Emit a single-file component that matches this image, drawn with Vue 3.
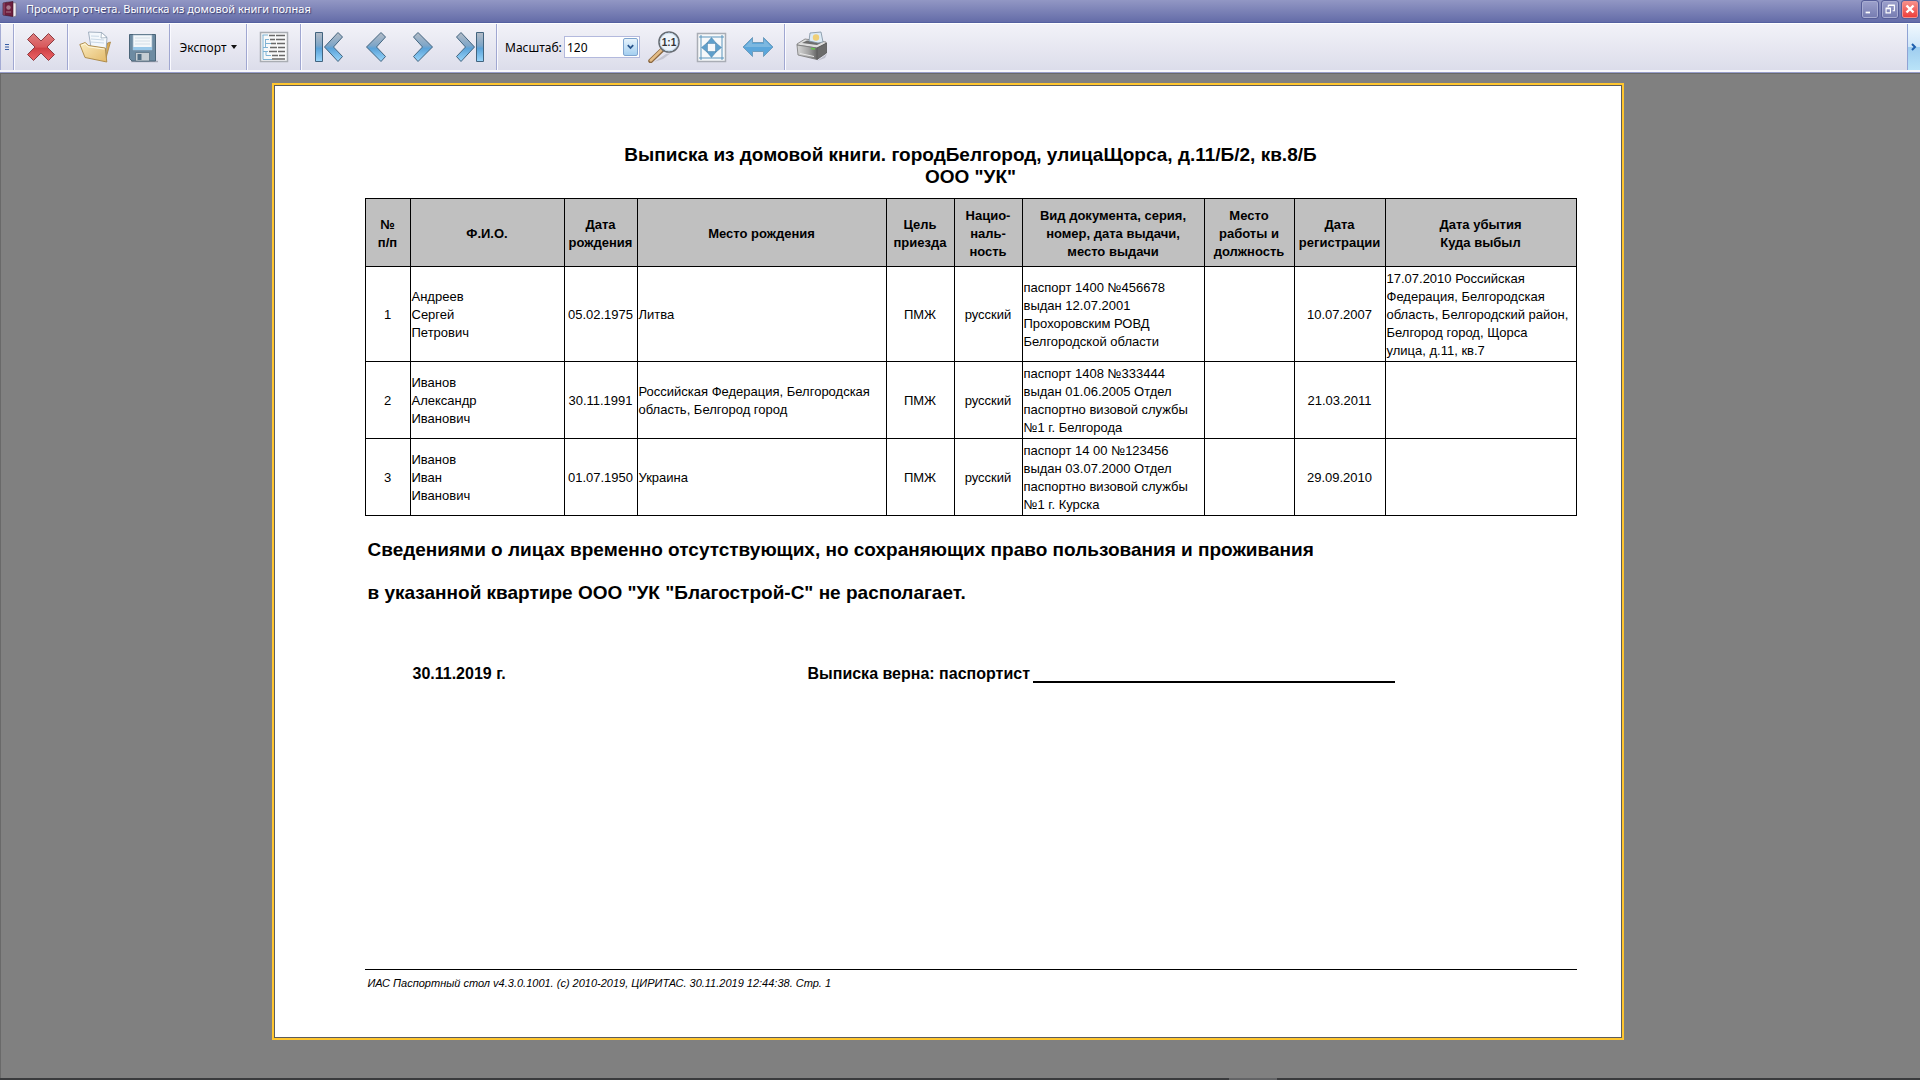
<script setup>
import { ref } from 'vue'

const scale = ref('120')

const columns = [
  { title: '№\nп/п', width: 45, center: true },
  { title: 'Ф.И.О.', width: 154 },
  { title: 'Дата\nрождения', width: 73, center: true },
  { title: 'Место рождения', width: 249 },
  { title: 'Цель\nприезда', width: 68, center: true },
  { title: 'Нацио-\nналь-\nность', width: 68, center: true },
  { title: 'Вид документа, серия,\nномер, дата выдачи,\nместо выдачи', width: 182 },
  { title: 'Место\nработы и\nдолжность', width: 90 },
  { title: 'Дата\nрегистрации', width: 91, center: true },
  { title: 'Дата убытия\nКуда выбыл', width: 191 },
]

const rows = [
  [
    '1',
    'Андреев\nСергей\nПетрович',
    '05.02.1975',
    'Литва',
    'ПМЖ',
    'русский',
    'паспорт 1400 №456678\nвыдан 12.07.2001\nПрохоровским РОВД\nБелгородской области',
    '',
    '10.07.2007',
    '17.07.2010 Российская\nФедерация, Белгородская\nобласть, Белгородский район,\nБелгород город, Щорса\nулица, д.11, кв.7',
  ],
  [
    '2',
    'Иванов\nАлександр\nИванович',
    '30.11.1991',
    'Российская Федерация, Белгородская\nобласть, Белгород город',
    'ПМЖ',
    'русский',
    'паспорт 1408 №333444\nвыдан 01.06.2005 Отдел\nпаспортно визовой службы\n№1 г. Белгорода',
    '',
    '21.03.2011',
    '',
  ],
  [
    '3',
    'Иванов\nИван\nИванович',
    '01.07.1950',
    'Украина',
    'ПМЖ',
    'русский',
    'паспорт 14 00 №123456\nвыдан 03.07.2000 Отдел\nпаспортно визовой службы\n№1 г. Курска',
    '',
    '29.09.2010',
    '',
  ],
]
</script>

<template>
  <div class="window">
    <header class="titlebar">
      <svg class="app-icon" viewBox="0 0 16 16" aria-hidden="true">
        <path d="M4 1l10 1v13l-3 1z" fill="#f2eef0" stroke="#77707c" stroke-width=".6" />
        <path d="M1 2l10-1.500v15L1 14z" fill="#6d1f3f" stroke="#3c1226" stroke-width=".6" />
        <path d="M2 2v12" stroke="#9c5673" />
        <circle cx="6.500" cy="6.500" r="2.200" fill="#a5788b" />
        <path d="M4 11h5" stroke="#a5788b" />
      </svg>
      <h1 class="caption">Просмотр отчета. Выписка из домовой книги полная</h1>
      <button class="win-btn" type="button" aria-label="Свернуть">
        <svg viewBox="0 0 16 16"><path d="M3 12h5" stroke="#fff" stroke-width="2" /></svg>
      </button>
      <button class="win-btn" type="button" aria-label="Восстановить">
        <svg viewBox="0 0 16 16" fill="none" stroke="#fff" stroke-width="1.300">
          <path d="M6 6V4h7v6h-2M6 3.500h7.500" />
          <path d="M3.500 7.500h5v5h-5zM3 7h6" />
        </svg>
      </button>
      <button class="win-btn close" type="button" aria-label="Закрыть">
        <svg viewBox="0 0 16 16"><path d="M4 4l8 8M12 4l-8 8" stroke="#fff" stroke-width="2.800" /></svg>
      </button>
    </header>

    <svg class="defs" width="0" height="0" aria-hidden="true">
      <defs>
        <linearGradient id="blue" x1="0" y1="0" x2="0" y2="1">
          <stop offset="0" stop-color="#b5bcc6" />
          <stop offset=".45" stop-color="#7ea6c8" />
          <stop offset=".55" stop-color="#5aa2d8" />
          <stop offset="1" stop-color="#9ad6fb" />
        </linearGradient>
        <linearGradient id="red" x1="0" y1="0" x2="0" y2="1">
          <stop offset="0" stop-color="#e07f80" />
          <stop offset=".5" stop-color="#d8585b" />
          <stop offset=".55" stop-color="#cd4044" />
          <stop offset="1" stop-color="#ee6468" />
        </linearGradient>
        <linearGradient id="folder" x1="0" y1="0" x2="1" y2="1">
          <stop offset="0" stop-color="#fbecc0" />
          <stop offset="1" stop-color="#e3b968" />
        </linearGradient>
        <linearGradient id="metal" x1="0" y1="0" x2="1" y2="0">
          <stop offset="0" stop-color="#d8d8d8" />
          <stop offset=".6" stop-color="#a2a2a2" />
          <stop offset="1" stop-color="#666" />
        </linearGradient>
      </defs>
    </svg>

    <nav class="toolbar" aria-label="Панель инструментов">
      <div class="grip">
        <svg viewBox="0 0 6 8"><path d="M1 1.500h4M1 4h4M1 6.500h4" stroke="#3a5fa5" /></svg>
      </div>
      <div class="group">
        <button class="tool" type="button" aria-label="Закрыть отчет">
          <svg viewBox="0 0 32 32">
            <path d="M8.500 2.500l7.500 7.500 7.500-7.500 6 6-7.500 7.500 7.500 7.500-6 6L16 22l-7.500 7.500-6-6L10 16 2.500 8.500z" fill="url(#red)" stroke="#8c3c42" stroke-linejoin="round" />
          </svg>
        </button>
      </div>
      <div class="group">
        <button class="tool" type="button" aria-label="Открыть">
          <svg viewBox="0 0 32 32">
            <path d="M27 27l4.500-16-3 1-4 14z" fill="#d9aa55" stroke="#a27c39" stroke-width=".7" />
            <path d="M9.500 1l13 .5 5.500 5-1.500 20-13-1z" fill="#f4f8fc" stroke="#8fa0b2" stroke-width=".8" />
            <path d="M22.500 1.500l-.5 5.500 6-.5z" fill="#fff" stroke="#8fa0b2" stroke-width=".7" />
            <path d="M12 5l8 .3M12 8l13 1M12 11l13 1" stroke="#c9d8e6" />
            <path d="M.8 13.500l5.500-2 3 3 17 2.500 1.500 14L6 26.500z" fill="url(#folder)" stroke="#a88443" stroke-width=".9" stroke-linejoin="round" />
            <path d="M2 14.500l4-1.700 3 3 16.500 2.300" fill="none" stroke="#fff8dd" />
          </svg>
        </button>
        <button class="tool" type="button" aria-label="Сохранить">
          <svg viewBox="0 0 32 32">
            <path d="M4 30.500h27" stroke="#a8abb8" stroke-width="1.500" />
            <path d="M2.500 3.500h26v26.500H5l-2.500-2.500z" fill="#6d8ba2" stroke="#4b6579" />
            <path d="M6 4h19v15H6z" fill="#f3f7fa" stroke="#9cb2c4" stroke-width=".7" />
            <path d="M6 16h19v3H6z" fill="#9ac9ea" />
            <path d="M8 7h15M8 10h15M8 13h15" stroke="#d3dee7" />
            <path d="M8.500 21.500h14v8.500h-14z" fill="#c5cdd3" stroke="#5b7183" stroke-width=".8" />
            <path d="M10.500 23h4v6h-4z" fill="#516e84" />
          </svg>
        </button>
      </div>
      <div class="group">
        <button class="export" type="button">
          Экспорт
          <svg viewBox="0 0 6 4"><path d="M0 0h6L3 4z" fill="#111" /></svg>
        </button>
      </div>
      <div class="group">
        <button class="tool" type="button" aria-label="Структура отчета">
          <svg viewBox="0 0 32 32">
            <path d="M2.500 1.500h27v29h-27z" fill="#f8f9fa" stroke="#a9adb3" stroke-width="1.500" />
            <path d="M4.500 4H10M5 4v22M5 16.500h5M7.500 8v9M7.500 8.500H11M7.500 12.500H13M5 20.500h5M8 20.500v4h5M5 26v2.500h9" fill="none" stroke="#7fb3d4" />
            <path d="M11 4.500h6m1 0h9M12 8.500h5m1 0h9M13 12.500h5m1 0h8M12 16.500h7m1 0h7M11 20.500h8m1 0h7M14 24.500h6m1 0h6M14 28h13" stroke="#6a6a6a" stroke-width="1.500" />
          </svg>
        </button>
      </div>
      <div class="group nav">
        <button class="tool" type="button" aria-label="Первая страница">
          <svg viewBox="0 0 32 32" fill="url(#blue)" stroke="#42647f" stroke-linejoin="round">
            <path d="M2.500 1.500h7v29h-7z" />
            <path d="M25 1.500l4.500 4.500L20.500 16l9 9.500-4.500 5L11.500 16z" />
          </svg>
        </button>
        <button class="tool" type="button" aria-label="Предыдущая страница">
          <svg viewBox="0 0 32 32" fill="url(#blue)" stroke="#42647f" stroke-linejoin="round">
            <path d="M21 1.500l4.500 4.500L16.500 16l9 9.500-4.500 5L6.500 16z" />
          </svg>
        </button>
        <button class="tool" type="button" aria-label="Следующая страница">
          <svg viewBox="0 0 32 32" fill="url(#blue)" stroke="#42647f" stroke-linejoin="round">
            <path d="M11 1.500L6.500 6l9 10-9 9.500 4.500 5L25.500 16z" />
          </svg>
        </button>
        <button class="tool" type="button" aria-label="Последняя страница">
          <svg viewBox="0 0 32 32" fill="url(#blue)" stroke="#42647f" stroke-linejoin="round">
            <path d="M22.500 1.500h7v29h-7z" />
            <path d="M7 1.500L2.500 6l9 10-9 9.500 4.500 5L20.500 16z" />
          </svg>
        </button>
      </div>
      <div class="group nav">
        <label class="scale-label" for="scale">Масштаб:</label>
        <div class="combo">
          <select id="scale" v-model="scale">
            <option>100</option>
            <option>120</option>
            <option>150</option>
          </select>
          <span class="combo-arrow">
            <svg viewBox="0 0 7 6"><path d="M.8 1.200l2.700 2.800 2.700-2.800" fill="none" stroke="#27548c" stroke-width="1.800" /></svg>
          </span>
        </div>
        <button class="tool" type="button" aria-label="Масштаб 1:1">
          <svg viewBox="0 0 32 32">
            <path d="M6 31l12-8 5-1-8 6z" fill="#c3c4d0" />
            <path d="M14 19L2.500 30" stroke="#8c6840" stroke-width="4.500" stroke-linecap="round" />
            <path d="M13.500 19L2.700 29.500" stroke="#e4bd88" stroke-width="2.500" stroke-linecap="round" />
            <circle cx="21" cy="11" r="10" fill="#edf4fa" stroke="#666c73" stroke-width="1.600" />
            <circle cx="21" cy="11" r="8.800" fill="none" stroke="#c4d9ea" />
            <text x="21" y="15" text-anchor="middle" class="ratio">1:1</text>
          </svg>
        </button>
        <button class="tool" type="button" aria-label="Страница целиком">
          <svg viewBox="0 0 32 32">
            <path d="M2.500 2.500h28v28h-28z" fill="#f6f8fa" stroke="#a9adb5" stroke-width="1.500" />
            <path d="M6 4v25M27 4v25M4 6h25M4 27h25" stroke="#5a95bd" />
            <path d="M16.500 6.500l5 6h-10zM16.500 26.500l5-6h-10zM6.500 16.500l6-5v10zM26.500 16.500l-6-5v10z" fill="#5f9fcb" stroke="#4a83aa" stroke-width=".5" />
          </svg>
        </button>
        <button class="tool" type="button" aria-label="По ширине страницы">
          <svg viewBox="0 0 32 32">
            <path d="M1 16L10.500 6.500v5h11v-5L31 16l-9.500 9.500v-5h-11v5z" fill="#5ba6db" stroke="#6f9dbd" stroke-linejoin="round" />
            <path d="M2.500 16l7.500-7.500v4.500h12V8.500l7.500 7.500z" fill="#7db8e0" />
          </svg>
        </button>
      </div>
      <div class="group last">
        <button class="tool" type="button" aria-label="Печать">
          <svg viewBox="0 0 32 32">
            <path d="M3 26l18 4 10-7-2 4-8 3z" fill="#bcbdca" />
            <path d="M1 13L9 8l21 3v2L21 17 1 14z" fill="#dedede" stroke="#777" stroke-width=".8" />
            <path d="M6 12l5-2.500 15 2-5 2.500z" fill="#6d6d6d" />
            <path d="M13 10l1-8 11-1 2 10-5 1z" fill="#dceaf5" stroke="#7c8fa0" stroke-width=".8" />
            <circle cx="20" cy="6.500" r="3.200" fill="#efcf77" />
            <path d="M1 14L21 17v11.500L2 24z" fill="url(#metal)" stroke="#777" stroke-width=".8" />
            <path d="M21 17l9.500-5v10L21 28.500z" fill="#6b6b6b" stroke="#555" stroke-width=".8" />
            <path d="M4 22l14 3v1l-14-3z" fill="#e8e8e8" />
            <path d="M15 17.500l4 .6" stroke="#65c94a" stroke-width="1.500" />
          </svg>
        </button>
      </div>
      <button class="overflow" type="button" aria-label="Другие кнопки">
        <svg viewBox="0 0 6 8"><path d="M1 1l3 3-3 3" fill="none" stroke="#1f5fae" stroke-width="2" /></svg>
      </button>
    </nav>

    <main class="viewer">
      <article class="sheet">
        <h2 class="heading">
          Выписка из домовой книги. городБелгород, улицаЩорса, д.11/Б/2, кв.8/Б<br />ООО "УК"
        </h2>
        <table class="register">
          <colgroup>
            <col v-for="c in columns" :key="c.title" :style="{ width: c.width + 'px' }" />
          </colgroup>
          <thead>
            <tr>
              <th v-for="c in columns" :key="c.title" scope="col">{{ c.title }}</th>
            </tr>
          </thead>
          <tbody>
            <tr v-for="row in rows" :key="row[0]">
              <td v-for="(cell, i) in row" :key="i" :class="{ center: columns[i].center }">{{ cell }}</td>
            </tr>
          </tbody>
        </table>
        <p class="statement">
          Сведениями о лицах временно отсутствующих, но сохраняющих право пользования и проживания<br />в указанной
          квартире ООО "УК "Благострой-С" не располагает.
        </p>
        <div class="signature">
          <span class="date">30.11.2019 г.</span>
          <span>Выписка верна: паспортист</span>
          <span class="line"></span>
        </div>
        <footer class="footnote">ИАС Паспортный стол v4.3.0.1001. (c) 2010-2019, ЦИРИТАС. 30.11.2019 12:44:38. Стр. 1</footer>
      </article>
    </main>
    <div class="taskbar"><span class="task"></span></div>
  </div>
</template>

<style>
body {
  margin: 0;
}
</style>

<style scoped>
* {
  box-sizing: border-box;
}
.window {
  display: flex;
  flex-direction: column;
  min-height: 100vh;
  background: #808080;
  font-family: "Noto Sans", "Open Sans", sans-serif;
  font-size: 12px;
  color: #000;
}
button {
  padding: 0;
  border: 0;
  background: none;
  font: inherit;
  color: inherit;
}
.defs {
  position: absolute;
}
.titlebar {
  display: flex;
  align-items: center;
  gap: 4px;
  height: 23px;
  padding: 0 2px 4px;
  background: linear-gradient(#9297c4, #646ca8);
  border-bottom: 1px solid #5460a0;
}
.app-icon {
  width: 16px;
  height: 16px;
}
.caption {
  flex: 1;
  margin: 0 0 0 4px;
  font-size: 11px;
  font-weight: 400;
  line-height: 16px;
  color: #fff;
  text-shadow: 1px 1px 1px #3b4173;
}
.win-btn {
  width: 16px;
  height: 17px;
  border: 1px solid #a9add2;
  border-radius: 2px;
  background: linear-gradient(#9b9fca, #777db2);
  outline: 1px solid #565d98;
}
.win-btn svg {
  display: block;
  width: 14px;
  height: 14px;
}
.win-btn.close {
  background: linear-gradient(#f58d87, #ee3f3c);
  border-color: #f3908c;
}
.toolbar {
  display: flex;
  height: 50px;
  padding-bottom: 2px;
  border-top: 1px solid #fff;
  border-bottom: 1px solid #969dca;
  background: linear-gradient(#f2f2f8, #dbdcea);
  box-shadow: inset 0 -2px #f7f7fc;
}
.grip {
  display: flex;
  align-items: center;
  justify-content: center;
  width: 14px;
  margin-right: 1px;
  border-left: 1px solid #a4abd4;
  border-right: 1px solid #a0a7d1;
  box-shadow: 1px 0 #fafaff;
}
.grip svg {
  width: 6px;
  height: 8px;
}
.group {
  display: flex;
  align-items: center;
  margin-right: 1px;
  padding: 0 2px;
  border-right: 1px solid #a0a7d1;
  box-shadow: 1px 0 #fafaff;
}
.group.nav {
  padding: 0 3px;
}
.group.last {
  border: 0;
  box-shadow: none;
}
.tool {
  display: flex;
  align-items: center;
  justify-content: center;
  width: 48px;
  height: 40px;
}
.nav .tool {
  width: 47px;
}
.tool svg {
  width: 32px;
  height: 32px;
}
.ratio {
  font: bold 10px "Liberation Sans", sans-serif;
  fill: #333;
}
.export {
  display: flex;
  align-items: center;
  justify-content: center;
  gap: 5px;
  width: 71px;
  height: 40px;
}
.export svg {
  width: 6px;
  height: 4px;
}
.scale-label {
  width: 63px;
  padding-left: 4px;
  white-space: nowrap;
}
.combo {
  position: relative;
  width: 76px;
  height: 22px;
}
.combo select {
  width: 100%;
  height: 100%;
  padding: 0 2px;
  border: 1px solid #b3b9dd;
  border-radius: 0;
  background: #fff;
  font: inherit;
  color: inherit;
  appearance: none;
}
.combo-arrow {
  position: absolute;
  top: 2px;
  right: 2px;
  display: flex;
  align-items: center;
  justify-content: center;
  width: 15px;
  height: 18px;
  border: 1px solid #7fa5cf;
  border-radius: 2px;
  background: linear-gradient(#e7f3fc, #a4cff0);
  pointer-events: none;
}
.combo-arrow svg {
  width: 7px;
  height: 6px;
}
.overflow {
  display: flex;
  align-items: center;
  justify-content: center;
  width: 13px;
  margin-left: auto;
  border-left: 1px solid #8fa3d4;
  background: linear-gradient(#f0f8fe, #cfe6f9 50%, #9fcdef 51%, #b9e3f8);
}
.overflow svg {
  width: 6px;
  height: 8px;
}
.viewer {
  flex: 1;
  padding: 11px 26px 37px 0;
  border-top: 1px solid #696969;
  border-left: 1px solid #696969;
}
.sheet {
  display: flex;
  flex-direction: column;
  max-width: 1348px;
  min-height: 953px;
  margin: 0 auto;
  padding: 58px 44px 45px 90px;
  border: 1px solid #5c5c5c;
  outline: 2px solid #ffc62f;
  background: #fff;
  font-family: "Liberation Sans", sans-serif;
}
.heading {
  margin: 0 0 10px;
  font-size: 19px;
  line-height: 22px;
  text-align: center;
}
.register {
  width: 100%;
  table-layout: fixed;
  border-collapse: collapse;
  font-size: 13px;
  line-height: 18px;
  white-space: pre-line;
}
.register th,
.register td {
  height: 77px;
  padding: 2px 1px 0;
  border: 1px solid #000;
  vertical-align: middle;
  text-align: left;
}
.register th {
  height: 68px;
  padding: 2px 0 0;
  background: #c0c0c0;
  text-align: center;
}
.register tbody tr:first-child td {
  height: 95px;
}
.register td.center {
  text-align: center;
}
.statement {
  margin: 12px 0 0 3px;
  font-size: 19px;
  font-weight: 700;
  line-height: 43px;
}
.signature {
  display: flex;
  align-items: center;
  margin: 50px 0 0 48px;
  font-size: 16px;
  font-weight: 700;
  line-height: 20px;
}
.date {
  width: 395px;
}
.line {
  align-self: flex-end;
  width: 362px;
  margin: 0 0 1px 3px;
  border-bottom: 2px solid #000;
}
.footnote {
  margin-top: auto;
  padding: 4px 3px 0;
  border-top: 1px solid #000;
  font-size: 11px;
  font-style: italic;
  line-height: 18px;
}
.taskbar {
  height: 2px;
  background: #3a3b3d;
}
.task {
  display: block;
  width: 48px;
  height: 2px;
  margin-left: 64%;
  background: #636466;
}
</style>
